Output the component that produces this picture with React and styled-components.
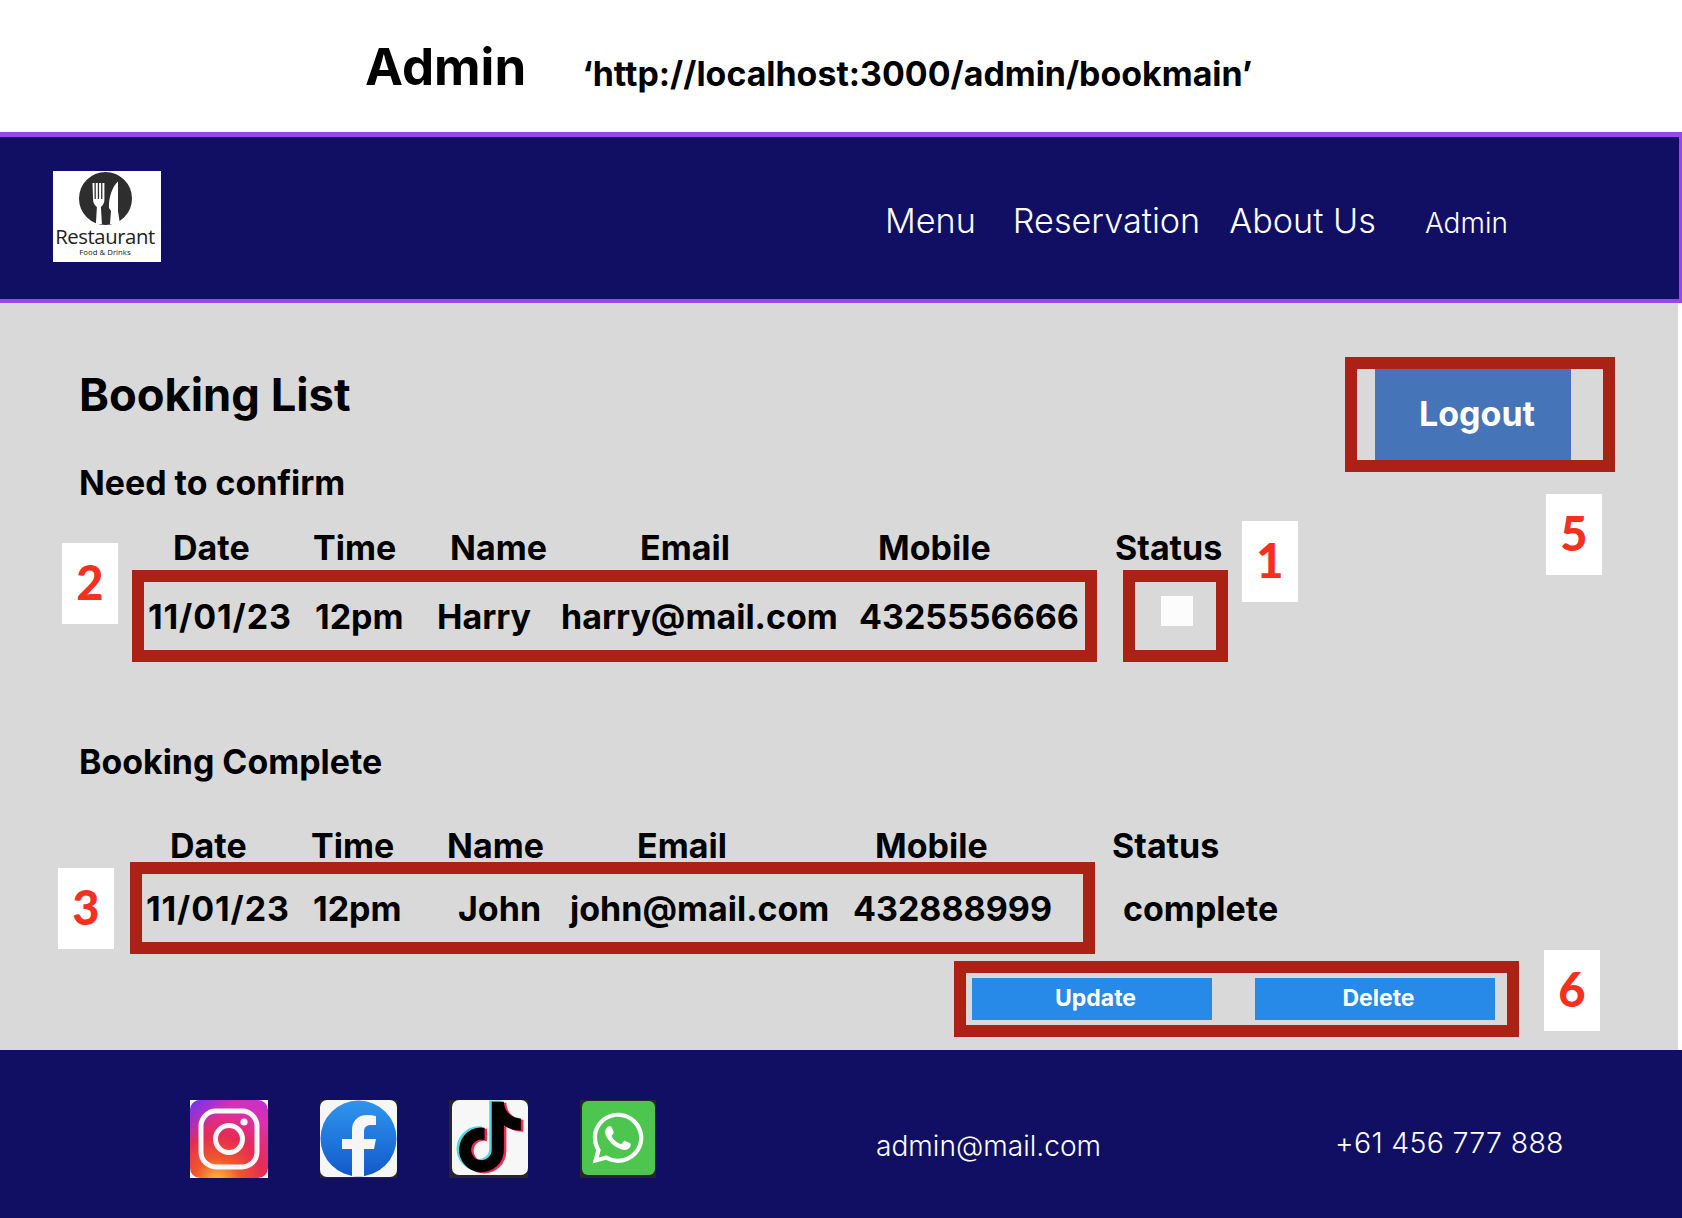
import React from 'react'
import styled, { createGlobalStyle } from 'styled-components'
import { FaWhatsapp } from 'react-icons/fa'

const GlobalStyle = createGlobalStyle`
  html, body {
    margin: 0;
    padding: 0;
    background: #fff;
  }
  * {
    box-sizing: border-box;
  }
  body {
    font-family: Inter, "Liberation Sans", sans-serif;
    color: #000;
  }
`

const Page = styled.div`
  width: 1682px;
  height: 1218px;
  overflow: hidden;
`

const TopBar = styled.div`
  height: 132px;
  padding: 37px 0 0 365px;
  display: flex;
  align-items: flex-start;
`

const PageName = styled.h1`
  margin: 0;
  font-size: 51px;
  line-height: 60px;
  font-weight: 700;
`

const PageUrl = styled.span`
  margin: 7px 0 0 56px;
  font-size: 33.9px;
  line-height: 60px;
  font-weight: 700;
`

const Nav = styled.nav`
  height: 171px;
  background: #100f63;
  border: 5px solid #9748e8;
  border-width: 5px 3px 4px 0;
  display: flex;
  align-items: center;
  padding-left: 53px;
`

const LogoBox = styled.div`
  width: 108px;
  height: 91px;
  margin-top: -3px;
  padding: 1px 4px 0 0;
  background: #fff;
  display: flex;
  flex-direction: column;
  align-items: center;
  color: #222;
  font-family: "Open Sans", sans-serif;
`

const LogoName = styled.div`
  font-size: 20.3px;
  line-height: 20px;
  margin-top: 1px;
  letter-spacing: -0.4px;
`

const LogoTag = styled.div`
  margin-top: 1px;
  font-size: 7.8px;
  line-height: 10px;
`

const NavLinks = styled.div`
  margin: 4px 0 0 724px;
  display: flex;
  align-items: baseline;
`

const NavLink = styled.a`
  margin-left: ${p => p.$gap || 0}px;
  font-size: ${p => p.$size || 34.2}px;
  font-weight: 300;
  color: #fff;
`

const Main = styled.main`
  position: relative;
  width: 1678px;
  height: 747px;
  background: #d9d9d9;
  padding: 54px 0 0 79px;
`

const HeadRow = styled.div`
  display: flex;
  justify-content: space-between;
  height: 172px;
`

const HeadText = styled.div`
  padding-top: 10px;
`

const Title = styled.h2`
  margin: 0;
  font-size: 45.3px;
  line-height: 56px;
  font-weight: 700;
`

const SectionTitle = styled.h3`
  margin: ${p => p.$top || 0}px 0 0;
  font-size: 33.9px;
  line-height: 40px;
  font-weight: 700;
`

const LogoutFrame = styled.div`
  width: 270px;
  height: 115px;
  margin-right: 63px;
  border: 12px solid #ab2115;
  padding-left: 18px;
`

const LogoutButton = styled.button`
  width: 196px;
  height: 100%;
  border: 0;
  background: #4674b8;
  color: #fff;
  font-family: inherit;
  font-size: 34px;
  font-weight: 700;
  padding: 0 0 2px 8px;
`

const Cols = styled.div`
  display: grid;
  grid-template-columns: ${p => p.$cols};
  margin-left: ${p => p.$left}px;
  margin-top: ${p => p.$top || 0}px;
  font-size: 34px;
  line-height: 38px;
  font-weight: 700;
  height: ${p => p.$height}px;
`

const RowWrap = styled.div`
  display: flex;
  margin-left: ${p => p.$left}px;
`

const RedBox = styled.div`
  border: 12px solid #ab2115;
  height: 92px;
  width: ${p => p.$width}px;
  margin-left: ${p => p.$gap || 0}px;
  display: ${p => (p.$cols ? 'grid' : 'flex')};
  grid-template-columns: ${p => p.$cols || 'none'};
  align-items: center;
  justify-content: ${p => (p.$cols ? 'start' : 'center')};
  padding: ${p => p.$textTop || 0}px 0 0 ${p => (p.$cols ? 4 : 0)}px;
  font-size: 34px;
  font-weight: 700;
  white-space: nowrap;
`

const DateCell = styled.span`
  letter-spacing: 0.9px;
`

const Check = styled.span`
  width: 32px;
  height: 30px;
  margin: -10px 0 0 3px;
  background: #fcfcfc;
`

const PlainCell = styled.div`
  margin-left: 28px;
  height: 92px;
  padding-top: 1px;
  display: flex;
  align-items: center;
  font-size: 34px;
  font-weight: 700;
`

const ActionFrame = styled.div`
  width: 565px;
  height: 76px;
  margin: 7px 0 0 875px;
  border: 12px solid #ab2115;
  padding: 5px 12px 0 6px;
  display: flex;
  justify-content: space-between;
`

const ActionButton = styled.button`
  width: 240px;
  height: 42px;
  border: 0;
  background: #2789e8;
  color: #fff;
  font-family: inherit;
  font-size: 23px;
  font-weight: 700;
  padding: 0 0 3px 7px;
`

const Badge = styled.div`
  position: absolute;
  left: ${p => p.$x}px;
  top: ${p => p.$y}px;
  width: 56px;
  height: 81px;
  padding-bottom: 4px;
  background: #fff;
  display: flex;
  align-items: center;
  justify-content: center;
  color: #f5301e;
  font-family: Lato, "Open Sans", sans-serif;
  font-size: 47px;
  font-weight: 900;
`

const Footer = styled.footer`
  height: 168px;
  background: #100f63;
  color: #fff;
  display: flex;
  align-items: flex-start;
  padding: 50px 0 0 190px;
`

const SocialIcon = styled.div`
  width: ${p => p.$w || 78}px;
  height: 78px;
  margin-right: ${p => p.$gap}px;
  flex: none;
  background: ${p => p.$bg || 'transparent'};
  display: flex;
  align-items: center;
  justify-content: center;
  svg {
    display: block;
  }
`

const GreenTile = styled.div`
  width: 73px;
  height: 74px;
  margin-top: -2px;
  border-radius: 6px;
  background: #4cc64f;
  display: flex;
  align-items: center;
  justify-content: center;
`

const Contact = styled.div`
  margin: ${p => p.$top}px 0 0 ${p => p.$left}px;
  font-size: ${p => p.$size}px;
  line-height: 36px;
  font-weight: 300;
  letter-spacing: ${p => p.$spacing}px;
  white-space: nowrap;
`

const headCols = '140px 137px 190px 238px 237px 110px'
const headCols2 = '141px 136px 190px 238px 237px 110px'

const LogoMark = () => (
  <svg width="53" height="53" viewBox="0 0 53 53">
    <circle cx="26.500" cy="26.500" r="26.500" fill="#2e2e2e" />
    <path
      d="M13.500 11h2v16h1.300V11h2v16h1.300V11h2v16h1.300V11h2v17c0 3-1.800 5.500-3.500 7l1 17h-6l1-17c-2-1.500-3.800-4-3.800-7z"
      fill="#fff"
    />
    <path d="M39 9.500C33 15 29.500 26 30 36l2 3-1 13h10l-2-13z" fill="#fff" />
  </svg>
)

const InstagramIcon = () => (
  <svg width="78" height="78" viewBox="0 0 78 78">
    <defs>
      <radialGradient id="ig" cx="0.35" cy="1.05" r="1.2">
        <stop offset="0" stopColor="#fdc23f" />
        <stop offset="0.25" stopColor="#f0562b" />
        <stop offset="0.5" stopColor="#e62b55" />
        <stop offset="0.8" stopColor="#dd2fb0" />
        <stop offset="1" stopColor="#c22fd0" />
      </radialGradient>
      <linearGradient id="igtop" x1="0" y1="0" x2="0.3" y2="0.3">
        <stop offset="0" stopColor="#6a35ee" />
        <stop offset="1" stopColor="#6a35ee" stopOpacity="0" />
      </linearGradient>
    </defs>
    <rect width="78" height="78" fill="#f2f2f5" />
    <rect width="78" height="78" rx="10" fill="url(#ig)" />
    <rect width="78" height="78" rx="10" fill="url(#igtop)" />
    <rect x="11" y="11" width="56" height="56" rx="15" fill="none" stroke="#f8f8f8" strokeWidth="5" />
    <circle cx="39" cy="39" r="13.500" fill="none" stroke="#f8f8f8" strokeWidth="5" />
    <circle cx="54" cy="22" r="3.600" fill="#f8f8f8" />
  </svg>
)

const FacebookIcon = () => (
  <svg width="77" height="78" viewBox="0 0 77 78">
    <defs>
      <linearGradient id="fb" x1="0" y1="0" x2="0" y2="1">
        <stop offset="0" stopColor="#2f95ee" />
        <stop offset="1" stopColor="#1259cc" />
      </linearGradient>
      <clipPath id="fbclip">
        <circle cx="38.500" cy="38.500" r="38" />
      </clipPath>
    </defs>
    <rect width="77" height="78" fill="#26262c" />
    <rect width="77" height="77" rx="7" fill="#f6f6f6" />
    <circle cx="38.500" cy="38.500" r="38" fill="url(#fb)" />
    <path
      clipPath="url(#fbclip)"
      d="M32 78V49H22V39H32V30C32 21 38 15 47 15C50 15 54 15.600 56 16V25H51C46.500 25 44 27 44 32V39H56L54 49H44V78Z"
      fill="#f6f6f6"
    />
  </svg>
)

const TIKTOK = 'M448,209.91a210.06,210.06,0,0,1-122.77-39.25V349.38A162.55,162.55,0,1,1,185,188.31V278.2a74.62,74.62,0,1,0,52.23,71.18V0l88,0a121.18,121.18,0,0,0,1.86,22.17h0A122.18,122.18,0,0,0,381,102.39a121.43,121.43,0,0,0,67,20.14Z'

const TiktokIcon = () => (
  <svg width="79" height="78" viewBox="0 0 79 78">
    <rect width="79" height="78" fill="#26262c" />
    <rect x="3" width="76" height="75" rx="7" fill="#f7f7f7" />
    <g transform="translate(10 0) scale(0.138)">
      <path d={TIKTOK} fill="#49dcdc" transform="translate(-18 4)" />
      <path d={TIKTOK} fill="#f0294f" transform="translate(18 20)" />
      <path d={TIKTOK} fill="#000" transform="translate(0 12)" />
    </g>
  </svg>
)

const Row = ({ cols, width, textTop, date, cells }) => (
  <RedBox $width={width} $cols={cols} $textTop={textTop}>
    <DateCell>{date}</DateCell>
    {cells.map(c => (
      <span key={c}>{c}</span>
    ))}
  </RedBox>
)

export default function App() {
  return (
    <Page>
      <GlobalStyle />
      <TopBar>
        <PageName>Admin</PageName>
        <PageUrl>‘http://localhost:3000/admin/bookmain’</PageUrl>
      </TopBar>
      <Nav>
        <LogoBox>
          <LogoMark />
          <LogoName>Restaurant</LogoName>
          <LogoTag>Food &amp; Drinks</LogoTag>
        </LogoBox>
        <NavLinks>
          <NavLink>Menu</NavLink>
          <NavLink $gap={37}>Reservation</NavLink>
          <NavLink $gap={29}>About Us</NavLink>
          <NavLink $gap={49} $size={28}>Admin</NavLink>
        </NavLinks>
      </Nav>
      <Main>
        <HeadRow>
          <HeadText>
            <Title>Booking List</Title>
            <SectionTitle $top={40}>Need to confirm</SectionTitle>
          </HeadText>
          <LogoutFrame>
            <LogoutButton>Logout</LogoutButton>
          </LogoutFrame>
        </HeadRow>
        <Cols $cols={headCols} $left={94} $height={41}>
          <span>Date</span>
          <span>Time</span>
          <span>Name</span>
          <span>Email</span>
          <span>Mobile</span>
          <span>Status</span>
        </Cols>
        <RowWrap $left={53}>
          <Row
            width={965}
            cols="167px 122px 124px 298px 220px"
            date="11/01/23"
            cells={['12pm', 'Harry', 'harry@mail.com', '4325556666']}
          />
          <RedBox $width={105} $gap={26}>
            <Check />
          </RedBox>
        </RowWrap>
        <SectionTitle $top={80}>Booking Complete</SectionTitle>
        <Cols $cols={headCols2} $left={91} $top={45} $height={35}>
          <span>Date</span>
          <span>Time</span>
          <span>Name</span>
          <span>Email</span>
          <span>Mobile</span>
          <span>Status</span>
        </Cols>
        <RowWrap $left={51}>
          <Row
            width={965}
            textTop={1}
            cols="167px 145px 112px 283px 200px"
            date="11/01/23"
            cells={['12pm', 'John', 'john@mail.com', '432888999']}
          />
          <PlainCell>complete</PlainCell>
        </RowWrap>
        <ActionFrame>
          <ActionButton>Update</ActionButton>
          <ActionButton>Delete</ActionButton>
        </ActionFrame>
        <Badge $x={1242} $y={218}>1</Badge>
        <Badge $x={62} $y={240}>2</Badge>
        <Badge $x={58} $y={565}>3</Badge>
        <Badge $x={1546} $y={191}>5</Badge>
        <Badge $x={1544} $y={647}>6</Badge>
      </Main>
      <Footer>
        <SocialIcon $gap={52}>
          <InstagramIcon />
        </SocialIcon>
        <SocialIcon $gap={52} $w={77}>
          <FacebookIcon />
        </SocialIcon>
        <SocialIcon $gap={52} $w={79}>
          <TiktokIcon />
        </SocialIcon>
        <SocialIcon $w={76} $bg="#26262c">
          <GreenTile>
            <FaWhatsapp size={58} color="#fff" />
          </GreenTile>
        </SocialIcon>
        <Contact $top={28} $left={220} $size={28.1} $spacing={0}>admin@mail.com</Contact>
        <Contact $top={25} $left={234} $size={28.5} $spacing={0.3}>+61 456 777 888</Contact>
      </Footer>
    </Page>
  )
}
